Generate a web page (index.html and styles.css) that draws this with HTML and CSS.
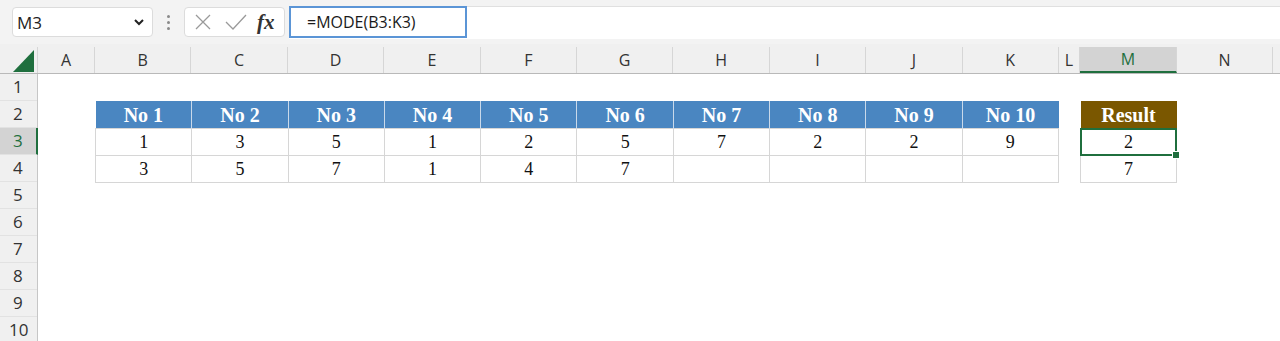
FILE: index.html
```html
<!DOCTYPE html>
<html lang="en">
<head>
  <meta charset="utf-8" />
  <title>MODE</title>
  <link rel="stylesheet" href="styles.css">
</head>
<body>
  <div class="toolbar">
    <div class="namebox">
      <span>M3</span>
      <svg class="chev" width="12" height="8" viewBox="0 0 12 8"><path d="M2 2 L6 6 L10 2" fill="none" stroke="#222" stroke-width="2"/></svg>
    </div>
    <div class="grip"><i></i><i></i><i></i></div>
    <div class="fxbox">
      <svg width="20" height="20" viewBox="0 0 20 20"><path d="M3 3 L17 17 M17 3 L3 17" stroke="#9a9a9a" stroke-width="1.3" fill="none"/></svg>
      <svg width="24" height="20" viewBox="0 0 24 20"><path d="M2 10 L9 17 L22 3" stroke="#9a9a9a" stroke-width="1.3" fill="none"/></svg>
      <span class="fx">fx</span>
    </div>
    <div class="formula">
      <div class="input">=MODE(B3:K3)</div>
    </div>
  </div>

  <div class="colheads">
    <div class="corner"><svg width="22" height="22" viewBox="0 0 22 22"><path d="M21 0 L21 22 L0 22 Z" fill="#1f6f3e"/></svg></div>
    <div class="ch" style="width:57px">A</div>
    <div class="ch">B</div><div class="ch">C</div><div class="ch">D</div><div class="ch">E</div><div class="ch">F</div>
    <div class="ch">G</div><div class="ch">H</div><div class="ch">I</div><div class="ch">J</div><div class="ch">K</div>
    <div class="ch" style="width:21px">L</div>
    <div class="ch sel" style="width:97px">M</div>
    <div class="ch" style="width:96px">N</div>
    <div class="ch rest"></div>
  </div>

  <div class="body">
    <div class="rowheads">
      <div class="rh">1</div><div class="rh">2</div><div class="rh sel">3</div><div class="rh">4</div><div class="rh">5</div>
      <div class="rh">6</div><div class="rh">7</div><div class="rh">8</div><div class="rh">9</div><div class="rh">10</div>
    </div>
    <div class="cells">
      <table class="data">
        <tr>
          <th>No 1</th><th>No 2</th><th>No 3</th><th>No 4</th><th>No 5</th>
          <th>No 6</th><th>No 7</th><th>No 8</th><th>No 9</th><th>No 10</th>
        </tr>
        <tr><td>1</td><td>3</td><td>5</td><td>1</td><td>2</td><td>5</td><td>7</td><td>2</td><td>2</td><td>9</td></tr>
        <tr><td>3</td><td>5</td><td>7</td><td>1</td><td>4</td><td>7</td><td></td><td></td><td></td><td></td></tr>
      </table>
      <table class="data result">
        <tr><th>Result</th></tr>
        <tr><td class="active">2</td></tr>
        <tr><td>7</td></tr>
      </table>
    </div>
  </div>
</body>
</html>
```

FILE: styles.css
```css
body {
  margin: 0;
  background: #fff;
  font-family: "Open Sans", "Noto Sans", sans-serif;
  color: #222;
  overflow: hidden;
  height: 341px;
}

/* formula bar */
.toolbar {
  display: flex;
  align-items: center;
  height: 44px;
  background: #f3f3f3;
  padding-left: 12px;
  box-sizing: border-box;
}
.namebox {
  width: 141px;
  height: 30px;
  box-sizing: border-box;
  background: #fff;
  border: 1px solid #dcdcdc;
  border-radius: 4px;
  display: flex;
  align-items: center;
  justify-content: space-between;
  padding: 0 7px 0 4px;
  font-size: 17px;
}
.grip {
  width: 31px;
  display: flex;
  flex-direction: column;
  align-items: center;
  gap: 3px;
}
.grip i {
  width: 3px;
  height: 3px;
  border-radius: 50%;
  background: #8a8a8a;
}
.fxbox {
  width: 101px;
  height: 30px;
  box-sizing: border-box;
  background: #fff;
  border: 1px solid #dcdcdc;
  border-radius: 4px;
  display: flex;
  align-items: center;
  padding-left: 8px;
  gap: 11px;
}
.fx {
  font-family: "Liberation Serif", serif;
  font-style: italic;
  font-weight: bold;
  font-size: 21px;
  color: #333;
  margin-left: -2px;
}
.formula {
  flex: 1;
  height: 32px;
  margin-left: 4px;
  background: #fff;
  border-top: 1px solid #e0e0e0;
  display: flex;
}
.input {
  width: 178px;
  box-sizing: border-box;
  border: 2px solid #5b95d6;
  margin-top: -1px;
  height: 32px;
  padding: 3px 0 0 16px;
  font-size: 16px;
  color: #1a1a1a;
}

/* column headers */
.colheads {
  display: flex;
  height: 30px;
  background: #f0f0f0;
  border-bottom: 1px solid #b9b9b9;
  padding-top: 3px;
  box-sizing: border-box;
}
.corner {
  width: 38px;
  display: flex;
  justify-content: flex-end;
  align-items: flex-end;
  padding: 0 2px 1px 0;
  box-sizing: border-box;
  border-right: 1px solid #d6d6d6;
}
.ch {
  width: 96.4px;
  box-sizing: border-box;
  border-right: 1px solid #d6d6d6;
  text-align: center;
  font-size: 16px;
  line-height: 26px;
  color: #333;
}
.ch.sel {
  background: #d3d3d3;
  color: #1f6f3e;
  border-bottom: 2px solid #1f6f3e;
  line-height: 24px;
}
.ch.rest {
  flex: 1;
  border-right: none;
}

/* rows */
.body {
  display: flex;
}
.rowheads {
  width: 38px;
  background: #f0f0f0;
  border-right: 1px solid #c6c6c6;
  box-sizing: border-box;
}
.rh {
  height: 27px;
  box-sizing: border-box;
  border-bottom: 1px solid #e2e2e2;
  font-size: 17px;
  line-height: 26px;
  padding-left: 13px;
  color: #333;
}
.rh:nth-child(n+10) {
  padding-left: 9px;
}
.rh.sel {
  background: #d3d3d3;
  color: #1f6f3e;
  margin-right: -1px;
  border-right: 2px solid #1f6f3e;
}

.cells {
  display: flex;
  align-items: flex-start;
  padding: 27px 0 0 57px;
}

.data {
  border-collapse: collapse;
  font-family: "Liberation Serif", serif;
  font-size: 18px;
  table-layout: fixed;
  width: 964px;
}
.data th, .data td {
  height: 27px;
  padding: 0;
  text-align: center;
  box-sizing: border-box;
}
.data th {
  background: #4a86c1;
  color: #fff;
  font-size: 20px;
  font-weight: bold;
  padding-top: 2px;
  border-right: 1px solid #c9d9ea;
}
.data th:last-child {
  border-right: none;
}
.data td {
  border: 1px solid #d6d6d6;
  color: #111;
  padding-top: 1px;
}

.result {
  width: 97px;
  margin-left: 21px;
}
.result th {
  background: #7a5700;
}
.result td.active {
  position: relative;
}
.result td.active::after {
  content: "";
  position: absolute;
  left: -1px;
  top: -1px;
  right: -1px;
  bottom: -1px;
  border: 2px solid #1f6f3e;
}
.result td.active::before {
  content: "";
  position: absolute;
  right: -4px;
  bottom: -4px;
  width: 6px;
  height: 6px;
  background: #1f6f3e;
  border: 1px solid #fff;
  z-index: 1;
}
```
